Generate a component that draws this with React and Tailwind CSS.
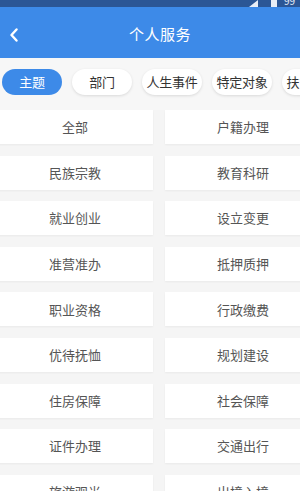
import React, { useState } from 'react';

const tabs = ['主题', '部门', '人生事件', '特定对象', '扶贫帮扶'];

const items = [
    '全部', '户籍办理',
    '民族宗教', '教育科研',
    '就业创业', '设立变更',
    '准营准办', '抵押质押',
    '职业资格', '行政缴费',
    '优待抚恤', '规划建设',
    '住房保障', '社会保障',
    '证件办理', '交通出行',
    '旅游观光', '出境入境',
];

export default function App() {
    const [active, setActive] = useState(0);

    return (
        <div
            className="w-[300px] h-[491px] overflow-hidden bg-[#f5f5f5]"
            style={{ fontFamily: '"Noto Sans CJK SC", "Noto Sans", sans-serif' }}
        >
            {/* status bar */}
            <div className="h-[7px] bg-[#2b5695] flex items-start overflow-hidden">
                <div className="flex items-start ml-[249px]">
                    <svg width="9" height="7" viewBox="0 0 9 7">
                        <path d="M9 0 L9 7 L0 7 Z" fill="#e8eef7" />
                    </svg>
                    <div className="ml-[13px] w-[6px] h-[7px] bg-[#e8eef7]" />
                    <span className="ml-[7px] text-[10px] leading-[7px] text-[#e8eef7] -mt-[3px]">99</span>
                </div>
            </div>

            {/* header */}
            <div className="h-[51px] bg-[#3d8ae8] flex items-center relative">
                <svg className="ml-[9px] mt-[4px]" width="10" height="14" viewBox="0 0 10 14">
                    <path d="M7.5 1.5 L2.5 7 L7.5 12.5" fill="none" stroke="#fff" strokeWidth="2.4" strokeLinecap="round" strokeLinejoin="round" />
                </svg>
                <div className="absolute left-[129px] top-[17px] text-white text-[15px] leading-[20px] tracking-[0.5px]">个人服务</div>
            </div>

            {/* tabs */}
            <div className="h-[52px] bg-[#f7f7f7] flex items-start pt-[11px] gap-[10px] pl-[2px] whitespace-nowrap overflow-hidden">
                {tabs.map((t, i) => (
                    <button
                        key={t}
                        onClick={() => setActive(i)}
                        className={`shrink-0 w-[60px] h-[26px] rounded-full text-[13px] leading-[26px] text-center tracking-[-0.3px] ${
                            active === i
                                ? 'bg-[#3d8ae8] text-white'
                                : 'bg-white text-[#333] shadow-[0_1px_3px_rgba(0,0,0,0.12)]'
                        }`}
                    >
                        {t}
                    </button>
                ))}
            </div>

            {/* categories */}
            <div className="grid grid-cols-[156px_156px] gap-x-[12px] gap-y-[11.6px] ml-[-3px]">
                {items.map((it) => (
                    <div
                        key={it}
                        className="h-[34px] bg-white flex items-center justify-center text-[13px] text-[#555] shadow-[0_1px_2px_rgba(0,0,0,0.05)]"
                    >
                        {it}
                    </div>
                ))}
            </div>
        </div>
    );
}
